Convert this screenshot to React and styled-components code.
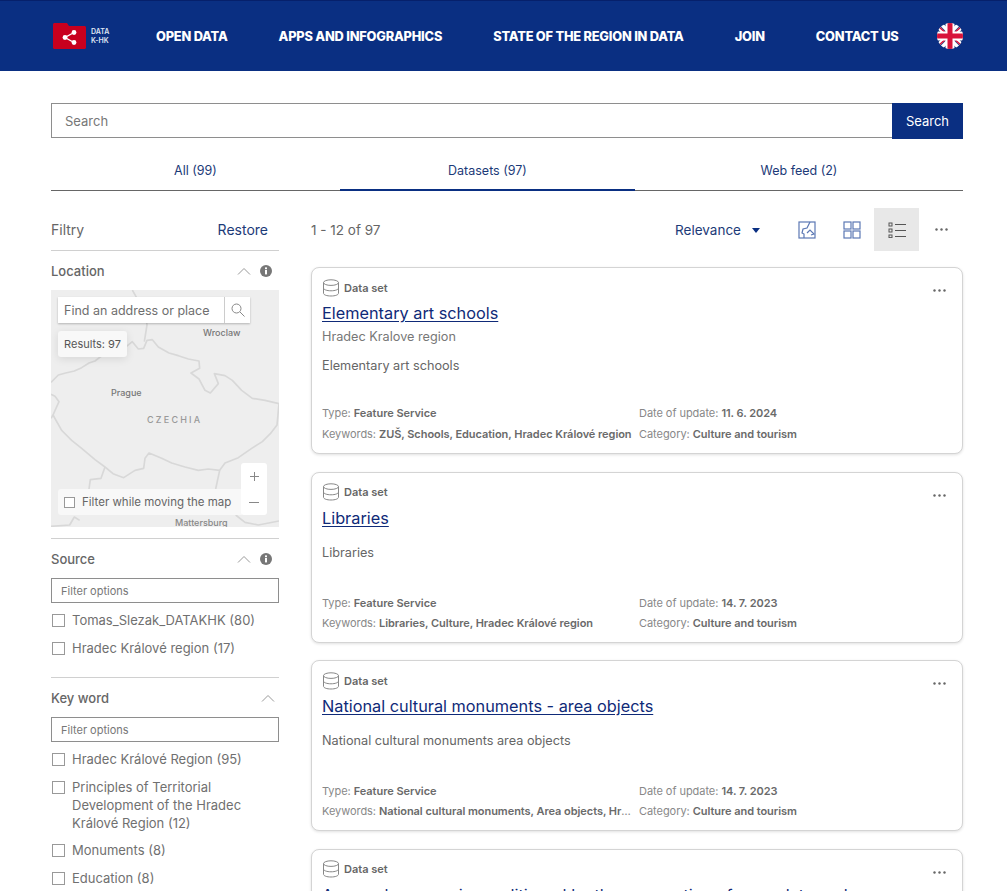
import styled, { createGlobalStyle } from "styled-components";

const GlobalStyle = createGlobalStyle`
    html, body {
        margin: 0;
        padding: 0;
        background: white;
    }
    * {
        box-sizing: border-box;
    }
`

const navy = "#0a2f82";

const Wrapper = styled.div`
    height: 100vh;
    overflow: hidden;
    font-family: 'Inter', 'Liberation Sans', sans-serif;
    color: #666;
`
const NaviBar = styled.div`
    height: 71px;
    background-color: ${navy};
    border-top: 1px solid #06206b;
    display: flex;
    align-items: center;
    padding: 0 40px 0 53px;
    gap: 51px;
`
const Logo = styled.div`
    width: 58px;
    margin-right: -6px;
    display: flex;
    align-items: center;
    gap: 5px;
`
const LogoText = styled.div`
    color: #dfe4f2;
    font-size: 7px;
    line-height: 9px;
    font-weight: 600;
`
const NavItem = styled.div`
    color: white;
    font-size: 12.8px;
    font-weight: 800;
    letter-spacing: -0.2px;
    white-space: nowrap;
`
const Flag = styled.svg`
    margin-left: -13px;
    flex: none;
`
const Content = styled.div`
    padding: 32px 44px 0 51px;
`
const SearchRow = styled.div`
    display: flex;
    align-items: flex-start;
`
const SearchInput = styled.div`
    flex: 1;
    height: 35px;
    border: 1px solid #8e8e8e;
    border-right: none;
    display: flex;
    align-items: center;
    padding-left: 13px;
    font-size: 13px;
    color: #777;
`
const SearchButton = styled.div`
    width: 71px;
    height: 36px;
    background-color: ${navy};
    color: white;
    font-size: 13px;
    display: flex;
    align-items: center;
    justify-content: center;
`
const Tabs = styled.div`
    display: grid;
    grid-template-columns: 289px 295px 328px;
    border-bottom: 1px solid #666;
    margin-top: 14px;
`
const Tab = styled.div`
    height: 38px;
    display: flex;
    align-items: center;
    justify-content: center;
    padding-bottom: 1px;
    font-size: 12.5px;
    color: #1c3a78;
    border-bottom: 2px solid ${(props) => (props.$active ? navy : "transparent")};
    margin-bottom: -1px;
`
const Columns = styled.div`
    display: flex;
    gap: 32px;
    margin-top: 16px;
`
const Sidebar = styled.div`
    width: 228px;
    flex: none;
`
const Main = styled.div`
    flex: 1;
    min-width: 0;
`
const FilterHead = styled.div`
    height: 44px;
    display: flex;
    align-items: center;
    justify-content: space-between;
    border-bottom: 1px solid #d0d0d0;
    font-size: 14px;
    padding-right: 11px;
    padding-top: 1px;
`
const Restore = styled.span`
    color: #1c3a78;
`
const Section = styled.div`
    border-bottom: ${(props) => (props.$last ? "none" : "1px solid #d0d0d0")};
    padding-bottom: ${(props) => props.$pb || 0}px;
`
const SectionHead = styled.div`
    height: 39px;
    display: flex;
    align-items: center;
    font-size: 13px;
    font-weight: 500;
    color: #666;
`
const SectionTitle = styled.span`
    flex: 1;
`
const HeadIcons = styled.span`
    display: flex;
    align-items: center;
    gap: 9px;
    padding-right: ${(props) => props.$pr}px;
`
const MapPanel = styled.div`
    position: relative;
    height: 237px;
    background-color: #eeeeee;
    overflow: hidden;
`
const MapLines = styled.svg`
    display: block;
    width: 228px;
    height: 237px;
    filter: blur(0.3px);
`
const MapLabel = styled.span`
    position: absolute;
    left: ${(props) => props.$x}px;
    top: ${(props) => props.$y}px;
    font-size: ${(props) => props.$size || 9}px;
    font-weight: 500;
    color: ${(props) => props.$color || "#777"};
    letter-spacing: ${(props) => props.$spacing || 0}px;
    white-space: nowrap;
`
const MapSearch = styled.div`
    position: absolute;
    left: 7px;
    top: 7px;
    width: 192px;
    height: 26px;
    background: white;
    box-shadow: 0 1px 2px rgba(0, 0, 0, 0.25);
    display: flex;
    align-items: center;
    font-size: 12.5px;
    color: #6e6e6e;
`
const MapSearchText = styled.span`
    flex: 1;
    padding-left: 6px;
    white-space: nowrap;
`
const MapSearchBtn = styled.span`
    width: 26px;
    height: 26px;
    border-left: 1px solid #ccc;
    display: flex;
    align-items: center;
    justify-content: center;
`
const MapResults = styled.div`
    position: absolute;
    left: 7px;
    top: 41px;
    width: 69px;
    height: 26px;
    background: #f8f8f8;
    border-radius: 3px;
    box-shadow: 0 2px 8px rgba(0, 0, 0, 0.1);
    display: flex;
    align-items: center;
    justify-content: center;
    font-size: 11px;
    color: #555;
    white-space: nowrap;
`
const MapFilter = styled.div`
    position: absolute;
    left: 7px;
    top: 199px;
    width: 184px;
    height: 26px;
    background: #f8f8f8;
    border-radius: 3px 0 0 3px;
    display: flex;
    align-items: center;
    gap: 7px;
    padding-left: 6px;
    font-size: 11.5px;
    color: #666;
    white-space: nowrap;
`
const Zoom = styled.div`
    position: absolute;
    left: 190px;
    top: 173px;
    width: 26px;
    height: 52px;
    background: white;
    border-radius: 3px;
    display: grid;
    grid-template-rows: 1fr 1fr;
    place-items: center;
`
const Box = styled.span`
    width: ${(props) => props.$size || 13}px;
    height: ${(props) => props.$size || 13}px;
    border: 1px solid #999;
    background: white;
    flex: none;
    display: inline-block;
`
const FilterInput = styled.div`
    height: 25px;
    border: 1px solid #8e8e8e;
    display: flex;
    align-items: center;
    padding-left: 9px;
    font-size: 11px;
    color: #777;
    margin-bottom: 8px;
`
const Option = styled.div`
    display: flex;
    gap: 7px;
    font-size: 13px;
    line-height: 18px;
    color: #707070;
    padding: 0 0 ${(props) => props.$pb || 9.5}px 1px;
`
const OptionBox = styled(Box)`
    margin-top: 3px;
`
const ResultBar = styled.div`
    height: 44px;
    display: flex;
    align-items: center;
    font-size: 13.5px;
    padding-top: 1px;
    color: #666;
`
const ResultCount = styled.span`
    flex: 1;
`
const Sort = styled.span`
    color: #1c3a78;
    display: flex;
    align-items: center;
    gap: 11px;
    margin-right: 24px;
`
const Caret = styled.span`
    width: 0;
    height: 0;
    border-left: 4.5px solid transparent;
    border-right: 4.5px solid transparent;
    border-top: 5px solid ${navy};
    margin-top: 1px;
`
const ViewBtn = styled.span`
    width: 45px;
    height: 43px;
    display: flex;
    align-items: center;
    justify-content: center;
    background: ${(props) => (props.$active ? "#e8e8e8" : "transparent")};
`
const MoreBtn = styled.span`
    width: 45px;
    display: flex;
    justify-content: center;
    margin-right: -1px;
`
const CardList = styled.div`
    display: flex;
    flex-direction: column;
    gap: 17.5px;
    margin-top: 16px;
`
const Card = styled.div`
    position: relative;
    height: ${(props) => props.$height}px;
    flex: none;
    border: 1px solid #d4d4d4;
    border-radius: 8px;
    box-shadow: 0 1px 3px rgba(0, 0, 0, 0.12);
    padding: 11px 10px 0;
    display: flex;
    flex-direction: column;
    background: white;
`
const CardKind = styled.div`
    display: flex;
    align-items: center;
    gap: 4px;
    height: 17px;
    font-size: 11px;
    font-weight: 600;
    color: #666;
`
const CardMore = styled.span`
    position: absolute;
    right: 16px;
    top: 21px;
    display: flex;
`
const CardTitle = styled.a`
    display: block;
    margin-top: 6px;
    font-size: 16.3px;
    line-height: 22px;
    color: #0f2a78;
    text-decoration: underline;
    text-underline-offset: 2px;
    white-space: nowrap;
    overflow: ${(props) => (props.$clip ? "visible" : "hidden")};
`
const CardSub = styled.div`
    margin-top: 4px;
    font-size: 12.7px;
    line-height: 18px;
    color: #777;
`
const CardDesc = styled.div`
    margin-top: ${(props) => props.$mt}px;
    font-size: 12.7px;
    line-height: 18px;
    color: #666;
`
const CardMeta = styled.div`
    margin-top: auto;
    display: grid;
    grid-template-columns: 317px 1fr;
    row-gap: ${(props) => props.$gap}px;
    font-size: 11px;
    line-height: 15px;
    color: #888;
    padding-bottom: 11px;
`
const MetaCell = styled.div`
    white-space: nowrap;
    overflow: hidden;
    text-overflow: ellipsis;
    padding-right: 6px;
    letter-spacing: -0.05px;

    b {
        font-weight: 600;
        color: #6a6a6a;
    }
`

const ChevronUp = () => (
    <svg width="14" height="8" viewBox="0 0 14 8" fill="none" stroke="#999" strokeWidth="1">
        <path d="M1 7.5L7 1.5L13 7.5" />
    </svg>
)
const InfoDot = () => (
    <svg width="12" height="12" viewBox="0 0 12 12">
        <circle cx="6" cy="6" r="6" fill="#777" />
        <rect x="5" y="5" width="2" height="4.4" fill="white" />
        <rect x="5" y="2.4" width="2" height="1.8" fill="white" />
    </svg>
)
const Dots = ({ color = "#666" }) => (
    <svg width="13" height="3" viewBox="0 0 13 3" fill={color}>
        <circle cx="1.5" cy="1.5" r="1.2" />
        <circle cx="6.5" cy="1.5" r="1.2" />
        <circle cx="11.5" cy="1.5" r="1.2" />
    </svg>
)
const DbIcon = () => (
    <svg width="18" height="18" viewBox="0 0 18 18" fill="none" stroke="#888" strokeWidth="1">
        <ellipse cx="9" cy="3.6" rx="7.5" ry="2.8" />
        <path d="M1.5 3.6V14.2C1.5 15.9 4.8 17 9 17S16.5 15.9 16.5 14.2V3.6" />
        <path d="M1.5 9C1.5 10.6 4.8 11.8 9 11.8S16.5 10.6 16.5 9" />
    </svg>
)
const FolderLogo = () => (
    <svg width="33" height="26" viewBox="0 0 33 26">
        <path d="M1.5 0H14L16 3H31.5C32.3 3 33 3.7 33 4.5V24.5C33 25.3 32.3 26 31.5 26H1.5C.7 26 0 25.3 0 24.5V1.5C0 .7.7 0 1.5 0Z" fill="#c8001e" />
        <path d="M21 9.5L12 14.5L21 19.5" fill="none" stroke="white" strokeWidth="1.4" />
        <circle cx="21" cy="9.5" r="2.4" fill="white" />
        <circle cx="12" cy="14.5" r="2.4" fill="white" />
        <circle cx="21" cy="19.5" r="2.4" fill="white" />
    </svg>
)
const UkFlag = () => (
    <Flag width="26" height="26" viewBox="0 0 26 26">
        <defs>
            <clipPath id="flagClip">
                <circle cx="13" cy="13" r="13" />
            </clipPath>
        </defs>
        <g clipPath="url(#flagClip)">
            <rect width="26" height="26" fill="#0a2a72" />
            <path d="M0 3L23 26M26 3L3 26M3 0L26 23M23 0L0 23" stroke="white" strokeWidth="3.5" />
            <path d="M1 3L11 12M25 3L15 12M1 23L11 14M25 23L15 14" stroke="#d8123a" strokeWidth="1.6" />
            <rect x="8.5" width="9" height="26" fill="white" />
            <rect y="8.5" width="26" height="9" fill="white" />
            <rect x="10.5" width="5" height="26" fill="#d8123a" />
            <rect y="10.5" width="26" height="5" fill="#d8123a" />
        </g>
    </Flag>
)
const MapIcon = () => (
    <svg width="18" height="18" viewBox="0 0 18 18" fill="none" stroke="#5c78b4" strokeWidth="1.2">
        <rect x="1" y="1" width="16" height="16" />
        <path d="M12 1L9 7L5 8L4 12L6 13V17M9 12L12 9L16 13L13 14" />
    </svg>
)
const GridIcon = () => (
    <svg width="18" height="18" viewBox="0 0 18 18" fill="none" stroke="#5c78b4" strokeWidth="1.2">
        <rect x="1" y="1" width="7" height="7" />
        <rect x="10" y="1" width="7" height="7" />
        <rect x="1" y="10" width="7" height="7" />
        <rect x="10" y="10" width="7" height="7" />
    </svg>
)
const ListIcon = () => (
    <svg width="18" height="16" viewBox="0 0 18 16" fill="none" stroke="#555" strokeWidth="1">
        <rect x="1" y="1" width="3" height="3" />
        <rect x="1" y="7" width="3" height="3" />
        <rect x="1" y="13" width="3" height="2.6" />
        <path d="M7 2.5H18M7 8.5H18M7 14.5H18" />
    </svg>
)
const Magnifier = () => (
    <svg width="14" height="14" viewBox="0 0 14 14" fill="none" stroke="#888" strokeWidth="1">
        <circle cx="5.5" cy="5.5" r="4.5" />
        <path d="M9 9L13.5 13.5" />
    </svg>
)
const PlusIcon = () => (
    <svg width="9" height="9" viewBox="0 0 9 9" stroke="#888" strokeWidth="1">
        <path d="M4.5 0V9M0 4.5H9" />
    </svg>
)
const MinusIcon = () => (
    <svg width="10" height="1" viewBox="0 0 10 1" stroke="#888" strokeWidth="1">
        <path d="M0 .5H10" />
    </svg>
)

// souradnice hranic jsou v 3x meritku, proto ten viewBox
const borders = [
    "M18 292L40 270L62 264L88 258L110 248L132 234L150 228L168 214L200 206L240 188L262 170L280 192L296 190L306 166L322 164L340 186L372 204L400 212L430 222L462 228L464 250L438 264L462 282L480 316L496 324L520 296L508 266L540 272L562 286L590 316L622 340L660 346L702 356L696 420L676 446L652 470L620 490L580 518L540 534L524 556L490 552L460 556L420 546L380 534L350 520L312 504L300 520L296 550L270 556L236 578L204 566L180 546L150 524L110 490L80 466L50 436L24 390L42 350L30 334L18 328",
    "M262 15L276 40L300 70L306 120L298 170",
    "M180 546L168 580L136 584L132 612",
    "M524 556L512 612",
    "M572 690L600 712L640 720L702 708",
    "M18 724L74 720L88 696L104 706",
    "M18 400L24 390",
]

const Search = () => <MapSearchBtn><Magnifier /></MapSearchBtn>

const CardBlock = ({ title, height, sub, desc, descGap, metaGap, date, keywords }) => (
    <Card $height={height}>
        <CardKind><DbIcon />Data set</CardKind>
        <CardMore><Dots /></CardMore>
        <CardTitle href="#">{title}</CardTitle>
        {sub && <CardSub>{sub}</CardSub>}
        {desc && <CardDesc $mt={descGap}>{desc}</CardDesc>}
        {date && (
            <CardMeta $gap={metaGap}>
                <MetaCell>Type: <b>Feature Service</b></MetaCell>
                <MetaCell>Date of update: <b>{date}</b></MetaCell>
                <MetaCell>Keywords: <b>{keywords}</b></MetaCell>
                <MetaCell>Category: <b>Culture and tourism</b></MetaCell>
            </CardMeta>
        )}
    </Card>
)

const App = () => {
    return (
        <>
            <GlobalStyle />
            <Wrapper>
                <NaviBar>
                    <Logo>
                        <FolderLogo />
                        <LogoText>DATA<br />K-HK</LogoText>
                    </Logo>
                    <NavItem>OPEN DATA</NavItem>
                    <NavItem>APPS AND INFOGRAPHICS</NavItem>
                    <NavItem>STATE OF THE REGION IN DATA</NavItem>
                    <NavItem>JOIN</NavItem>
                    <NavItem>CONTACT US</NavItem>
                    <UkFlag />
                </NaviBar>
                <Content>
                    <SearchRow>
                        <SearchInput>Search</SearchInput>
                        <SearchButton>Search</SearchButton>
                    </SearchRow>
                    <Tabs>
                        <Tab>All (99)</Tab>
                        <Tab $active>Datasets (97)</Tab>
                        <Tab>Web feed (2)</Tab>
                    </Tabs>
                    <Columns>
                        <Sidebar>
                            <FilterHead>
                                <span>Filtry</span>
                                <Restore>Restore</Restore>
                            </FilterHead>
                            <Section $pb={11}>
                                <SectionHead>
                                    <SectionTitle>Location</SectionTitle>
                                    <HeadIcons $pr={7}><ChevronUp /><InfoDot /></HeadIcons>
                                </SectionHead>
                                <MapPanel>
                                    <MapLines viewBox="18 15 684 711" fill="none" stroke="#d8d8d8" strokeWidth="5" strokeLinejoin="round">
                                        {borders.map((d) => <path key={d} d={d} />)}
                                    </MapLines>
                                    <MapLabel $x={152} $y={37}>Wroclaw</MapLabel>
                                    <MapLabel $x={60} $y={97}>Prague</MapLabel>
                                    <MapLabel $x={96} $y={124} $color="#999" $spacing={2.2}>CZECHIA</MapLabel>
                                    <MapLabel $x={124} $y={227} $color="#888">Mattersburg</MapLabel>
                                    <MapSearch>
                                        <MapSearchText>Find an address or place</MapSearchText>
                                        <Search />
                                    </MapSearch>
                                    <MapResults>Results: 97</MapResults>
                                    <MapFilter><Box $size={11} />Filter while moving the map</MapFilter>
                                    <Zoom><PlusIcon /><MinusIcon /></Zoom>
                                </MapPanel>
                            </Section>
                            <Section $pb={11}>
                                <SectionHead>
                                    <SectionTitle>Source</SectionTitle>
                                    <HeadIcons $pr={7}><ChevronUp /><InfoDot /></HeadIcons>
                                </SectionHead>
                                <FilterInput>Filter options</FilterInput>
                                <Option><OptionBox />Tomas_Slezak_DATAKHK (80)</Option>
                                <Option><OptionBox />Hradec Králové region (17)</Option>
                            </Section>
                            <Section $last>
                                <SectionHead>
                                    <SectionTitle>Key word</SectionTitle>
                                    <HeadIcons $pr={4}><ChevronUp /></HeadIcons>
                                </SectionHead>
                                <FilterInput>Filter options</FilterInput>
                                <Option><OptionBox />Hradec Králové Region (95)</Option>
                                <Option><OptionBox /><span>Principles of Territorial Development of the Hradec Králové Region (12)</span></Option>
                                <Option><OptionBox />Monuments (8)</Option>
                                <Option><OptionBox />Education (8)</Option>
                            </Section>
                        </Sidebar>
                        <Main>
                            <ResultBar>
                                <ResultCount>1 - 12 of 97</ResultCount>
                                <Sort>Relevance<Caret /></Sort>
                                <ViewBtn><MapIcon /></ViewBtn>
                                <ViewBtn><GridIcon /></ViewBtn>
                                <ViewBtn $active><ListIcon /></ViewBtn>
                                <MoreBtn><Dots /></MoreBtn>
                            </ResultBar>
                            <CardList>
                                <CardBlock
                                    height={187}
                                    title="Elementary art schools"
                                    sub="Hradec Kralove region"
                                    desc="Elementary art schools"
                                    descGap={11}
                                    metaGap={6}
                                    date="11. 6. 2024"
                                    keywords="ZUŠ, Schools, Education, Hradec Králové region"
                                />
                                <CardBlock
                                    height={171}
                                    title="Libraries"
                                    desc="Libraries"
                                    descGap={15}
                                    metaGap={5}
                                    date="14. 7. 2023"
                                    keywords="Libraries, Culture, Hradec Králové region"
                                />
                                <CardBlock
                                    height={171}
                                    title="National cultural monuments - area objects"
                                    desc="National cultural monuments area objects"
                                    descGap={15}
                                    metaGap={5}
                                    date="14. 7. 2023"
                                    keywords="National cultural monuments, Area objects, Hradec Králové region"
                                />
                                <CardBlock
                                    height={171}
                                    title="Areas whose use is conditioned by the preparation of a regulatory plan or"
                                />
                            </CardList>
                        </Main>
                    </Columns>
                </Content>
            </Wrapper>
        </>
    )
}

export default App;
